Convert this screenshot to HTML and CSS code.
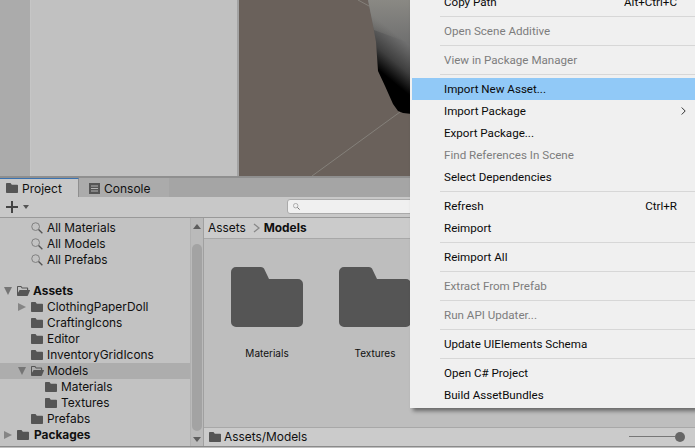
FILE: index.html
```html
<!DOCTYPE html>
<html lang="en">
<head>
    <meta charset="UTF-8">
    <meta name="viewport" content="width=device-width, initial-scale=1.0">
    <title>Project - Assets/Models</title>
    <link rel="stylesheet" href="styles.css">
</head>
<body>
    <svg class="defs" width="0" height="0">
        <symbol id="folder" viewBox="0 0 12 10"><path d="M0 .8C0 .3.3 0 .8 0h3.7l1.3 1.7h5.4c.5 0 .8.3.8.8v6.7c0 .5-.3.8-.8.8H.8c-.5 0-.8-.3-.8-.8z"/></symbol>
        <symbol id="folder-open" viewBox="0 0 13 10"><path fill-rule="evenodd" d="M0 .8C0 .3.3 0 .8 0h3.4l1.2 1.6h5c.5 0 .8.3.8.8V4h1.3c.4 0 .6.3.4.7L10.9 9.5c-.1.3-.4.5-.7.5H.8C.3 10 0 9.700 0 9.200zM1 6.800 2.600 4H10v-1.400H4.900L3.700 1H1z"/></symbol>
        <symbol id="search" viewBox="0 0 13 13"><circle cx="5" cy="5" r="4.200" fill="none" stroke="#7b7b7b"/><path d="M8.200 8.200 12.300 12.300" stroke="#555" stroke-width="1.500"/></symbol>
    </svg>

    <div class="app">
        <div class="top-row">
            <div class="side-strip"></div>
            <div class="side-panel"></div>
            <div class="scene">
                <svg class="scene-art" viewBox="239 0 456 176" width="456" height="176">
                    <defs>
                        <linearGradient id="body" gradientUnits="userSpaceOnUse" x1="380" y1="78" x2="408" y2="44">
                            <stop offset="0.12" stop-color="#000"/>
                            <stop offset="0.5" stop-color="#3f3f3f"/>
                            <stop offset="1" stop-color="#6f6f6f"/>
                        </linearGradient>
                        <linearGradient id="glow" gradientUnits="userSpaceOnUse" x1="0" y1="0" x2="0" y2="44">
                            <stop offset="0" stop-color="#8a8984"/>
                            <stop offset="1" stop-color="#8a8984" stop-opacity="0"/>
                        </linearGradient>
                    </defs>
                    <path d="M312 176 400 112M358 0 369 6" stroke="#85807a" fill="none"/>
                    <path d="M368 0 371 15 376 42 378 71 385 86 393 104 398 111 403 113 412 114V0z" fill="url(#body)"/>
                    <path d="M368 0 371 15 374 30 412 44V0z" fill="url(#glow)"/>
                </svg>
            </div>
        </div>

        <div class="tab-bar">
            <div class="tab tab-active">
                <svg class="icon-folder"><use href="#folder"/></svg>
                <span>Project</span>
            </div>
            <div class="tab tab-other">
                <svg class="icon-console" viewBox="0 0 11 11"><path d="M0 0h11v11H0z" fill="#555"/><path d="M2 3h7M2 5.500h7M2 8h7" stroke="#b4b4b4"/></svg>
                <span>Console</span>
            </div>
        </div>

        <div class="toolbar">
            <svg class="icon-plus" viewBox="0 0 12 12"><path d="M6 0v12M0 6h12" stroke="#444" stroke-width="2"/></svg>
            <span class="caret"></span>
            <div class="search-box">
                <svg class="icon-search-small"><use href="#search"/></svg>
            </div>
        </div>

        <div class="browser">
            <div class="tree-pane">
                <div class="tree">
                    <div class="row row-fav"><svg class="icon-search"><use href="#search"/></svg><span>All Materials</span></div>
                    <div class="row row-fav"><svg class="icon-search"><use href="#search"/></svg><span>All Models</span></div>
                    <div class="row row-fav"><svg class="icon-search"><use href="#search"/></svg><span>All Prefabs</span></div>

                    <div class="row row-root row-gap"><span class="arrow-down"></span><svg class="icon-open"><use href="#folder-open"/></svg><b>Assets</b></div>
                    <div class="row depth-1"><span class="arrow-right"></span><svg class="icon-folder"><use href="#folder"/></svg><span>ClothingPaperDoll</span></div>
                    <div class="row depth-1"><span class="arrow-none"></span><svg class="icon-folder"><use href="#folder"/></svg><span>CraftingIcons</span></div>
                    <div class="row depth-1"><span class="arrow-none"></span><svg class="icon-folder"><use href="#folder"/></svg><span>Editor</span></div>
                    <div class="row depth-1"><span class="arrow-none"></span><svg class="icon-folder"><use href="#folder"/></svg><span>InventoryGridIcons</span></div>
                    <div class="row depth-1 row-selected"><span class="arrow-down"></span><svg class="icon-open"><use href="#folder-open"/></svg><span>Models</span></div>
                    <div class="row depth-2"><svg class="icon-folder"><use href="#folder"/></svg><span>Materials</span></div>
                    <div class="row depth-2"><svg class="icon-folder"><use href="#folder"/></svg><span>Textures</span></div>
                    <div class="row depth-1"><span class="arrow-none"></span><svg class="icon-folder"><use href="#folder"/></svg><span>Prefabs</span></div>
                    <div class="row row-root"><span class="arrow-right"></span><svg class="icon-folder"><use href="#folder"/></svg><b>Packages</b></div>
                </div>
                <div class="scrollbar">
                    <span class="scroll-up"></span>
                    <div class="scroll-thumb"></div>
                    <span class="scroll-down"></span>
                </div>
            </div>

            <div class="content-pane">
                <div class="breadcrumb">
                    <span>Assets</span>
                    <svg class="crumb-sep" viewBox="0 0 7 10"><path d="M1 1 6 5 1 9" fill="none" stroke="#888" stroke-width="1.300"/></svg>
                    <b>Models</b>
                </div>
                <div class="grid">
                    <div class="card">
                        <svg class="big-folder" viewBox="0 0 72 60"><path d="M0 5a5 5 0 0 1 5-5h25q2 0 3 1.500L38 12h29a5 5 0 0 1 5 5v38a5 5 0 0 1-5 5H5a5 5 0 0 1-5-5z"/></svg>
                        <span>Materials</span>
                    </div>
                    <div class="card">
                        <svg class="big-folder" viewBox="0 0 72 60"><path d="M0 5a5 5 0 0 1 5-5h25q2 0 3 1.500L38 12h29a5 5 0 0 1 5 5v38a5 5 0 0 1-5 5H5a5 5 0 0 1-5-5z"/></svg>
                        <span>Textures</span>
                    </div>
                </div>
                <div class="path-bar">
                    <svg class="icon-folder"><use href="#folder"/></svg>
                    <span>Assets/Models</span>
                    <div class="zoom-slider"><div class="zoom-line"></div><div class="zoom-knob"></div></div>
                </div>
            </div>
        </div>
    </div>

    <div class="menu">
        <div class="item"><span>Copy Path</span><span class="shortcut">Alt+Ctrl+C</span></div>
        <div class="sep"></div>
        <div class="item off"><span>Open Scene Additive</span></div>
        <div class="sep"></div>
        <div class="item off"><span>View in Package Manager</span></div>
        <div class="sep"></div>
        <div class="item hover"><span>Import New Asset...</span></div>
        <div class="item"><span>Import Package</span><svg class="submenu" viewBox="0 0 5 8"><path d="M.7.5 4.200 4 .7 7.500" fill="none" stroke="#333"/></svg></div>
        <div class="item"><span>Export Package...</span></div>
        <div class="item off"><span>Find References In Scene</span></div>
        <div class="item"><span>Select Dependencies</span></div>
        <div class="sep"></div>
        <div class="item"><span>Refresh</span><span class="shortcut">Ctrl+R</span></div>
        <div class="item"><span>Reimport</span></div>
        <div class="sep"></div>
        <div class="item"><span>Reimport All</span></div>
        <div class="sep"></div>
        <div class="item off"><span>Extract From Prefab</span></div>
        <div class="sep"></div>
        <div class="item off"><span>Run API Updater...</span></div>
        <div class="sep"></div>
        <div class="item"><span>Update UIElements Schema</span></div>
        <div class="sep"></div>
        <div class="item"><span>Open C# Project</span></div>
        <div class="item"><span>Build AssetBundles</span></div>
    </div>
</body>
</html>
```

FILE: styles.css
```css
html, body {
    margin: 0;
    padding: 0;
    height: 100%;
    overflow: hidden;
}
body {
    font-family: Inter, "Noto Sans", sans-serif;
    font-size: 11.900px;
    color: #101010;
    background-color: #c0c0c0;
}
.defs {
    display: block;
    height: 0;
}
.app {
    display: flex;
    flex-direction: column;
    height: 448px;
}

/* upper editor windows */
.top-row {
    display: flex;
    height: 176px;
    flex-shrink: 0;
}
.side-strip {
    width: 31px;
    background-color: #ababab;
    border-right: 1px solid #c6c6c6;
    box-sizing: border-box;
}
.side-panel {
    width: 206px;
    background-color: #c1c1c1;
    border-right: 2px solid #a3a3a3;
}
.scene {
    flex: 1;
    background-color: #6a615b;
    overflow: hidden;
}
.scene-art {
    display: block;
}

/* tabs */
.tab-bar {
    display: flex;
    height: 21px;
    flex-shrink: 0;
    box-sizing: border-box;
    border-top: 2px solid #8f8f8f;
    background-color: #a5a5a5;
    font-size: 12px;
}
.tab {
    display: flex;
    align-items: center;
    height: 100%;
    box-sizing: border-box;
}
.tab-active {
    width: 79px;
    padding-left: 6px;
    gap: 4px;
    background-color: #c8c8c8;
    border-top: 1px solid #3a72b0;
    border-right: 1px solid #8f8f8f;
}
.tab-other {
    width: 90px;
    padding: 2px 0 0 10px;
    gap: 4px;
    background-color: #ababab;
}
.icon-console {
    width: 11px;
    height: 11px;
}

/* toolbar */
.toolbar {
    display: flex;
    align-items: center;
    height: 21px;
    flex-shrink: 0;
    box-sizing: border-box;
    padding-left: 6px;
    background-color: #c8c8c8;
    border-bottom: 1px solid #999;
}
.icon-plus {
    width: 12px;
    height: 12px;
}
.caret {
    width: 0;
    height: 0;
    margin-left: 5px;
    border-left: 3.500px solid transparent;
    border-right: 3.500px solid transparent;
    border-top: 4px solid #555;
}
.search-box {
    display: flex;
    align-items: center;
    width: 300px;
    height: 15px;
    margin: 0 0 1px 258px;
    padding-left: 5px;
    box-sizing: border-box;
    background-color: #f0f0f0;
    border: 1px solid #aaa;
    border-radius: 3px;
}
.icon-search-small {
    width: 7px;
    height: 7px;
}

/* browser */
.browser {
    display: flex;
    height: 229px;
    flex-shrink: 0;
    box-sizing: border-box;
    border-bottom: 1px solid #8a8a8a;
}
.tree-pane {
    display: flex;
    width: 204px;
    flex-shrink: 0;
    box-sizing: border-box;
    background-color: #c2c2c2;
    border-right: 1px solid #a0a0a0;
}
.tree {
    width: 190px;
    padding-top: 2px;
    box-sizing: border-box;
}
.row {
    display: flex;
    align-items: center;
    height: 16px;
    box-sizing: border-box;
    padding-bottom: 1px;
    white-space: nowrap;
}
.row-fav {
    padding-left: 31px;
}
.row-root {
    padding-left: 4px;
}
.row-gap {
    margin-top: 15px;
}
.depth-1 {
    padding-left: 18px;
}
.depth-2 {
    padding-left: 45px;
}
.row-selected {
    background-color: #adadad;
}
.row b, .breadcrumb b {
    font-weight: 700;
}
.row svg {
    margin-right: 4px;
    flex-shrink: 0;
}
.row-root svg {
    margin-right: 5px;
}
.row-root .icon-folder, .row-root .icon-open {
    margin-left: 5px;
}
.depth-1 .icon-folder, .depth-1 .icon-open {
    margin-left: 5px;
}
.arrow-down, .arrow-right, .arrow-none {
    width: 8px;
    height: 8px;
    flex-shrink: 0;
    box-sizing: border-box;
}
.arrow-down {
    border-left: 4px solid transparent;
    border-right: 4px solid transparent;
    border-top: 8px solid #757575;
}
.arrow-right {
    border-top: 4px solid transparent;
    border-bottom: 4px solid transparent;
    border-left: 8px solid #858585;
}
.icon-folder {
    width: 12px;
    height: 10px;
    flex-shrink: 0;
    fill: #555;
}
.icon-open {
    width: 13px;
    height: 10px;
    fill: #555;
}
.row .icon-open {
    margin-right: 3px;
}
.icon-search {
    width: 12px;
    height: 12px;
}

/* scrollbar */
.scrollbar {
    display: flex;
    flex-direction: column;
    align-items: center;
    width: 13px;
    background-color: #bababa;
    border-left: 1px solid #b0b0b0;
    box-sizing: border-box;
}
.scroll-up, .scroll-down {
    width: 0;
    height: 0;
    border-left: 4px solid transparent;
    border-right: 4px solid transparent;
}
.scroll-up {
    margin-top: 6px;
    border-bottom: 5px solid #5d5d5d;
}
.scroll-down {
    margin-top: 6px;
    border-top: 5px solid #5d5d5d;
}
.scroll-thumb {
    width: 10px;
    height: 187px;
    margin-top: 15px;
    border-radius: 5px;
    background-color: #a3a3a3;
}

/* right side */
.content-pane {
    display: flex;
    flex-direction: column;
    flex: 1;
    background-color: #bebebe;
}
.breadcrumb {
    display: flex;
    align-items: center;
    height: 21px;
    flex-shrink: 0;
    box-sizing: border-box;
    padding: 0 0 1px 4px;
    background-color: #cbcbcb;
    border-bottom: 1px solid #a8a8a8;
}
.crumb-sep {
    width: 7px;
    height: 10px;
    margin: 0 4px 0 7px;
}
.grid {
    display: flex;
    flex: 1;
    gap: 36px;
    padding: 28px 0 0 27px;
}
.card {
    display: flex;
    flex-direction: column;
    align-items: center;
    width: 72px;
    font-size: 10px;
}
.big-folder {
    display: block;
    width: 72px;
    height: 60px;
    margin-bottom: 20px;
    fill: #555;
}
.path-bar {
    display: flex;
    align-items: center;
    gap: 3px;
    height: 19px;
    flex-shrink: 0;
    box-sizing: border-box;
    padding: 0 0 1px 5px;
    background-color: #cbcbcb;
    border-top: 1px solid #a8a8a8;
}
.zoom-slider {
    display: flex;
    align-items: center;
    margin-left: auto;
    margin-right: 10px;
}
.zoom-line {
    width: 46px;
    height: 1px;
    background-color: #777;
}
.zoom-knob {
    width: 10px;
    height: 10px;
    border-radius: 50%;
    background-color: #666;
}

/* context menu */
.menu {
    position: absolute;
    left: 410px;
    top: -9px;
    width: 285px;
    box-sizing: border-box;
    padding: 0 0 2px 2px;
    background-color: #f0f0f0;
    box-shadow: 3px 3px 4px rgba(0, 0, 0, 0.45);
    font-family: Roboto, "Noto Sans", sans-serif;
    font-size: 11.600px;
    color: #0a0a0a;
}
.item {
    display: flex;
    align-items: center;
    height: 22px;
    padding: 0 18px 0 32px;
    white-space: nowrap;
}
.off {
    color: #7d7d7d;
}
.hover {
    background-color: #91c9f7;
}
.shortcut {
    margin-left: auto;
}
.submenu {
    width: 5px;
    height: 8px;
    margin-left: auto;
    margin-right: -9px;
}
.sep {
    height: 1px;
    margin: 3px 0 3px 28px;
    background-color: #d7d7d7;
}
```
